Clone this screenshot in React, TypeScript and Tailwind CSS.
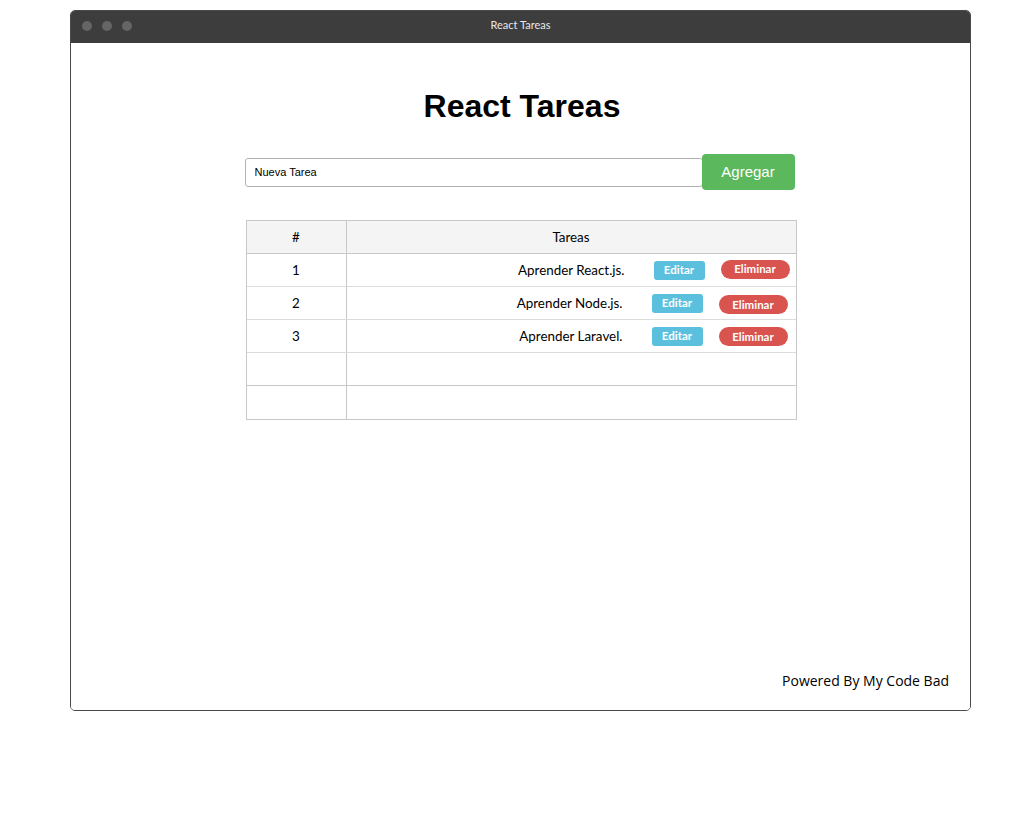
import React from "react";

const tasks = [
  { id: 1, name: "Aprender React.js.", pr: "pr-[6px]", delOffset: "-mt-[2px]" },
  { id: 2, name: "Aprender Node.js.", pr: "pr-[8px]", delOffset: "mt-[3px]" },
  { id: 3, name: "Aprender Laravel.", pr: "pr-[8px]", delOffset: "mt-[1px]" },
];

export default function App() {
  return (
    <div className="w-[1021px] h-[820px] bg-white pt-[10px] pl-[70px]">
      <div className="w-[901px] h-[701px] flex flex-col border border-[#4a4a4a] rounded-[5px] overflow-hidden">
        <div className="h-[32px] pb-[3px] bg-[#3d3d3d] flex items-center relative shrink-0">
          <div className="flex gap-[10px] pl-[11px]">
            <span className="w-[10px] h-[10px] rounded-full bg-[#656565]" />
            <span className="w-[10px] h-[10px] rounded-full bg-[#656565]" />
            <span className="w-[10px] h-[10px] rounded-full bg-[#656565]" />
          </div>
          <div className="absolute inset-0 pb-[3px] flex items-center justify-center text-[11px] text-[#e8e8e8] font-['Lato',sans-serif]">
            React Tareas
          </div>
        </div>
        <div className="flex-1 flex flex-col items-center bg-white">
          <h1 className="mt-[43px] text-[32px] leading-[40px] font-bold text-black font-['Liberation_Sans',Arial,sans-serif] pl-[3px]">
            React Tareas
          </h1>
          <div className="mt-[28px] w-[550px] -ml-[2px] flex items-center">
            <input
              className="w-[458px] h-[29px] border border-[#b3b3b3] rounded-[3px] pl-[9px] text-[11px] text-black placeholder-black font-['Liberation_Sans',Arial,sans-serif] outline-none"
              placeholder="Nueva Tarea"
            />
            <button className="-ml-[1px] w-[93px] h-[36px] bg-[#5cb85c] rounded-[4px] text-white text-[15px] font-['Liberation_Sans',Arial,sans-serif]">
              Agregar
            </button>
          </div>
          <div className="mt-[30px] w-[551px] ml-[1px] border border-[#c8c8c8] font-['Lato',sans-serif] text-[13.4px] text-black">
            <div className="flex h-[33px] bg-[#f4f4f4] border-b border-[#c8c8c8]">
              <div className="w-[100px] border-r border-[#c8c8c8] flex items-center justify-center">#</div>
              <div className="flex-1 flex items-center justify-center">Tareas</div>
            </div>
            {tasks.map((t) => (
              <div key={t.id} className="flex h-[33px] border-b border-[#dcdcdc]">
                <div className="w-[100px] border-r border-[#c8c8c8] flex items-center justify-center">{t.id}</div>
                <div className={`flex-1 flex items-center justify-end ${t.pr}`}>
                  <span>{t.name}</span>
                  <button className="ml-[29px] w-[51px] h-[19px] bg-[#5bc0de] rounded-[3px] text-white text-[11.5px] font-bold">
                    Editar
                  </button>
                  <button className={`ml-[16px] w-[69px] h-[19px] bg-[#d9534f] rounded-full text-white text-[11.5px] font-bold ${t.delOffset}`}>
                    Eliminar
                  </button>
                </div>
              </div>
            ))}
            <div className="flex h-[33px] border-b border-[#c8c8c8]">
              <div className="w-[100px] border-r border-[#c8c8c8]" />
              <div className="flex-1" />
            </div>
            <div className="flex h-[33px]">
              <div className="w-[100px] border-r border-[#c8c8c8]" />
              <div className="flex-1" />
            </div>
          </div>
          <div className="flex-1" />
          <div className="self-end pr-[21px] pb-[18px] text-[14px] leading-[22px] text-black font-['Open_Sans',sans-serif]">
            Powered By My Code Bad
          </div>
        </div>
      </div>
    </div>
  );
}
